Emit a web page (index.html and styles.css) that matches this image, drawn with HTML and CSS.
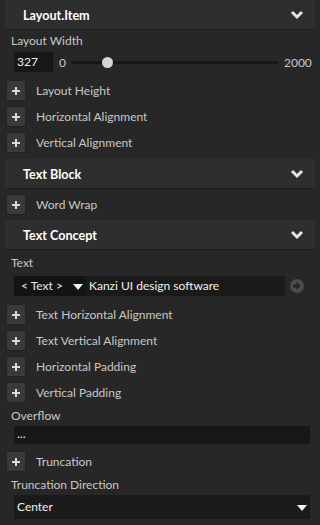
FILE: index.html
```html
<!DOCTYPE html>
<html>
<head>
<meta charset="utf-8">
<link rel="stylesheet" href="styles.css">
</head>
<body>
<div class="panel">
  <div class="header first"><span>Layout.Item</span><svg class="chev" width="14" height="10" viewBox="0 0 14 10"><path d="M2 2 L7 7 L12 2" fill="none" stroke="#e6e6e6" stroke-width="3"/></svg></div>
  <div class="label">Layout Width</div>
  <div class="slider-row">
    <div class="num">327</div>
    <span class="lim">0</span>
    <div class="track"><div class="thumb"></div></div>
    <span class="lim">2000</span>
  </div>
  <div class="prop"><div class="plus"></div><span>Layout Height</span></div>
  <div class="prop"><div class="plus"></div><span>Horizontal Alignment</span></div>
  <div class="prop"><div class="plus"></div><span>Vertical Alignment</span></div>

  <div class="header second"><span>Text Block</span><svg class="chev" width="14" height="10" viewBox="0 0 14 10"><path d="M2 2 L7 7 L12 2" fill="none" stroke="#e6e6e6" stroke-width="3"/></svg></div>
  <div class="prop after-header"><div class="plus"></div><span>Word Wrap</span></div>

  <div class="header third"><span>Text Concept</span><svg class="chev" width="14" height="10" viewBox="0 0 14 10"><path d="M2 2 L7 7 L12 2" fill="none" stroke="#e6e6e6" stroke-width="3"/></svg></div>
  <div class="label text-label">Text</div>
  <div class="text-row">
    <div class="res">&lt; Text &gt;<span class="tri"></span></div>
    <div class="field">Kanzi UI design software</div>
    <svg class="go" width="16" height="16" viewBox="0 0 16 16"><circle cx="8" cy="8" r="7" fill="#4d4d4d"/><path d="M4 6.5 H7.5 V3.8 L11.6 8 L7.5 12.2 V9.5 H4 Z" fill="#262626"/></svg>
  </div>
  <div class="prop"><div class="plus"></div><span>Text Horizontal Alignment</span></div>
  <div class="prop"><div class="plus"></div><span>Text Vertical Alignment</span></div>
  <div class="prop"><div class="plus"></div><span>Horizontal Padding</span></div>
  <div class="prop"><div class="plus"></div><span>Vertical Padding</span></div>
  <div class="label ovf-label">Overflow</div>
  <div class="input">...</div>
  <div class="prop trunc"><div class="plus"></div><span>Truncation</span></div>
  <div class="label dir-label">Truncation Direction</div>
  <div class="select">Center<span class="tri"></span></div>
</div>
</body>
</html>
```
FILE: styles.css
```css
* { box-sizing: border-box; }
html, body { margin: 0; padding: 0; }
body {
  background: #272727;
  font-family: "Lato", "Noto Sans", sans-serif;
  font-size: 12px;
  color: #c8c8c8;
  width: 320px;
  height: 525px;
  overflow: hidden;
}
.panel {
  display: flex;
  flex-direction: column;
}
.header {
  margin: 0 5px;
  height: 30px;
  background: #2e2e2e;
  border-bottom: 1px solid #1e1e1e;
  display: flex;
  align-items: center;
  justify-content: space-between;
  padding: 1px 11px 0 18px;
  color: #ffffff;
  font-weight: bold;
  font-size: 12.6px;
}
.header.second { margin-top: 4px; }
.header.third { margin-top: 3px; }
.chev { display: block; }
.label {
  padding-left: 11px;
  height: 20px;
  line-height: 20px;
  margin-top: 1px;
}
.label.text-label { margin-top: 3px; }
.label.ovf-label { margin-top: 1px; }
.label.dir-label { margin-top: 1px; }
.slider-row {
  display: flex;
  align-items: center;
  height: 20px;
  padding-left: 14px;
  margin-top: 1px;
  margin-bottom: 5px;
}
.num {
  width: 39px;
  height: 20px;
  background: #171717;
  color: #f0f0f0;
  padding-left: 3px;
  line-height: 20px;
}
.lim { padding: 0 5px 0 6px; }
.track {
  width: 207px;
  height: 3px;
  background: #161616;
  position: relative;
  border-radius: 2px;
}
.thumb {
  position: absolute;
  left: 31px;
  top: -4px;
  width: 11px;
  height: 11px;
  border-radius: 50%;
  background: #d6d6d6;
}
.prop {
  display: flex;
  align-items: center;
  height: 26px;
  padding-left: 6px;
}
.prop.after-header { margin-top: 2px; }
.prop.trunc { margin-top: 4px; }
.prop span { margin-left: 10px; }
.plus {
  width: 20px;
  height: 21px;
  background: #3a3a3a;
  border-radius: 2px;
  border: 1px solid #222;
  position: relative;
}
.plus::before, .plus::after {
  content: "";
  position: absolute;
  background: #dcdcdc;
}
.plus::before { left: 5px; top: 9px; width: 8px; height: 2px; }
.plus::after { left: 8px; top: 6px; width: 2px; height: 8px; }
.text-row {
  display: flex;
  align-items: center;
  padding-left: 14px;
  height: 20px;
  margin-top: 3px;
  margin-bottom: 5px;
}
.res {
  width: 72px;
  height: 20px;
  background: #141414;
  color: #e8e8e8;
  padding-left: 7px;
  line-height: 20px;
  position: relative;
}
.tri {
  position: absolute;
  right: 3px;
  top: 8px;
  width: 0;
  height: 0;
  border-left: 5px solid transparent;
  border-right: 5px solid transparent;
  border-top: 6px solid #f0f0f0;
}
.field {
  width: 199px;
  height: 20px;
  background: #1a1a1a;
  color: #f0f0f0;
  line-height: 20px;
  padding-left: 3px;
}
.go { margin-left: 4px; }
.input {
  margin: 0 10px 0 14px;
  height: 18px;
  background: #171717;
  color: #f0f0f0;
  padding-left: 3px;
  line-height: 15px;
}
.select {
  margin: 0 10px 0 14px;
  height: 24px;
  background: #1a1a1a;
  color: #f0f0f0;
  padding-left: 3px;
  line-height: 24px;
  position: relative;
}
.select .tri { top: 10px; right: 3px; }
```
